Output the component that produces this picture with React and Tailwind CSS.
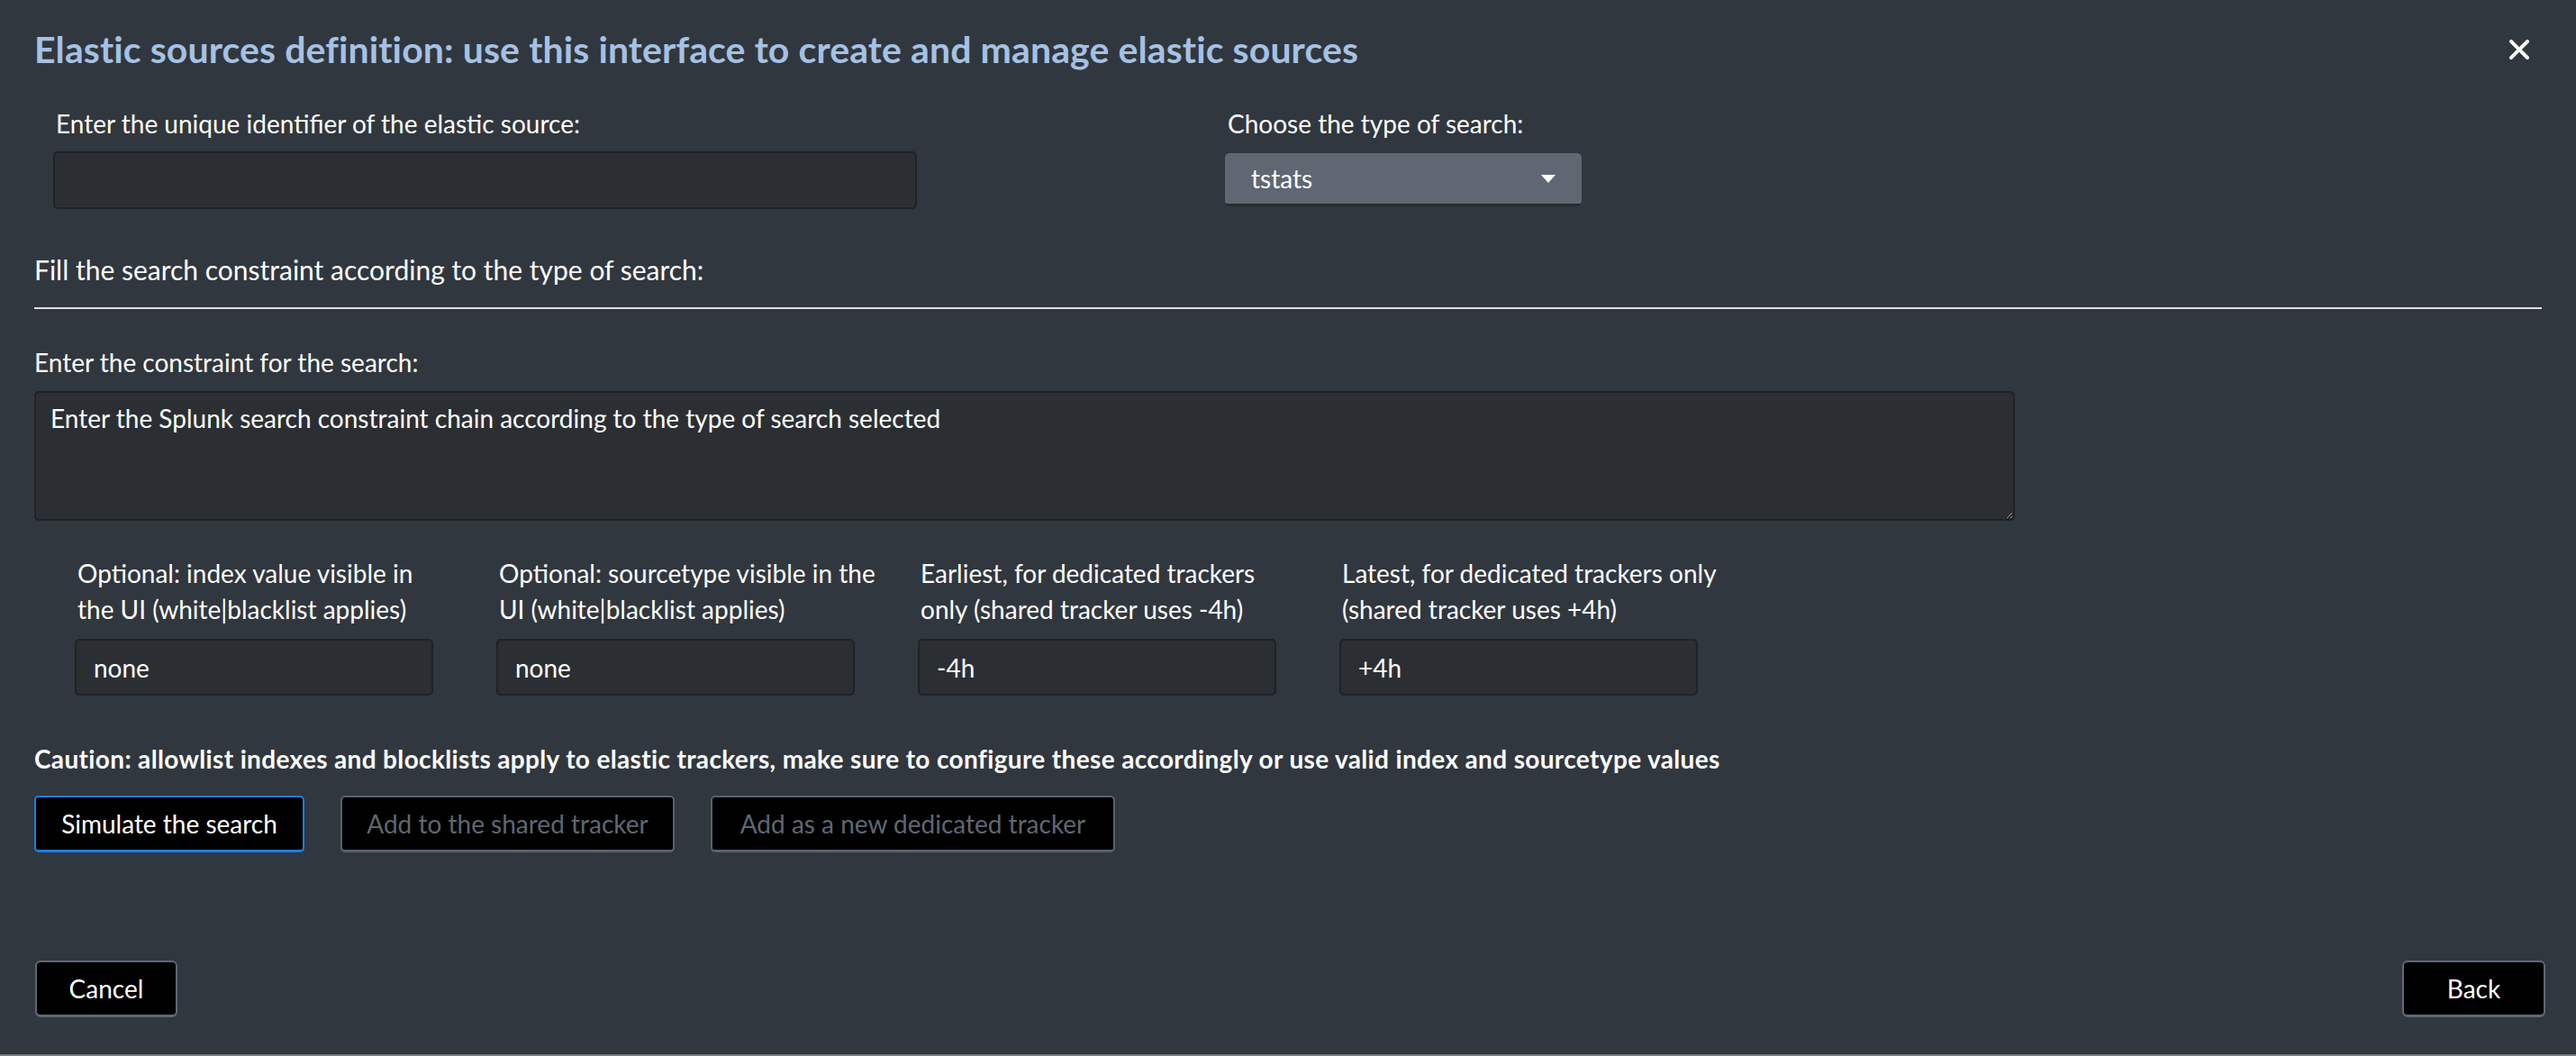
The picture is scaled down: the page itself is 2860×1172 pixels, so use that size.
import React from "react";

const font = { fontFamily: "Lato, 'Open Sans', sans-serif" };

function Field({ label1, label2, value }) {
  return (
    <div className="flex w-[398px] flex-col">
      <div className="pl-[3px] text-[28px] leading-[40px] text-white whitespace-nowrap">
        <div>{label1}</div>
        <div>{label2}</div>
      </div>
      <input
        defaultValue={value}
        className="mt-[13px] h-[63px] w-[398px] rounded-[5px] border-2 border-[#1f2326] bg-[#2b2f33] px-[19px] text-[28px] text-white outline-none"
      />
    </div>
  );
}

export default function App() {
  return (
    <div
      className="flex h-[1172px] w-[2860px] flex-col overflow-hidden bg-[#31373e] text-white"
      style={font}
    >
      <div className="flex flex-1 flex-col px-[38px]">
        {/* header */}
        <div className="flex items-center justify-between pt-[34px]">
          <h1 className="text-[41px] font-bold leading-[42px] tracking-[0.1px] text-[#a5c1e3]">
            Elastic sources definition: use this interface to create and manage elastic sources
          </h1>
          <button className="mr-[13px] flex h-[24px] w-[24px] items-center justify-center">
            <svg width="22" height="22" viewBox="0 0 22 22">
              <path d="M2 2 L20 20 M20 2 L2 20" stroke="white" strokeWidth="4" strokeLinecap="square" />
            </svg>
          </button>
        </div>

        {/* row 1 */}
        <div className="mt-[41px] flex">
          <div className="ml-[21px] flex w-[959px] flex-col">
            <div className="pl-[3px] text-[28px] leading-[40px]">
              Enter the unique identifier of the elastic source:
            </div>
            <input className="mt-[11px] h-[64px] w-[959px] rounded-[5px] border-2 border-[#1f2326] bg-[#2b2f33] px-[18px] text-[28px] text-white outline-none" />
          </div>
          <div className="ml-[342px] flex w-[396px] flex-col">
            <div className="pl-[3px] text-[28px] leading-[40px]">Choose the type of search:</div>
            <div className="mt-[13px] flex h-[59px] w-[396px] items-center justify-between rounded-[5px] border-b-[3px] border-[#262b30] bg-[#5f6773] pl-[29px] pr-[29px]">
              <span className="text-[28px] text-white">tstats</span>
              <svg width="16" height="9" viewBox="0 0 16 9">
                <path d="M0 0 L16 0 L8 9 Z" fill="white" />
              </svg>
            </div>
          </div>
        </div>

        {/* section title */}
        <div className="mt-[46px] text-[30px] leading-[42px]">
          Fill the search constraint according to the type of search:
        </div>
        <div className="mt-[21px] h-[2px] w-full bg-[#dcdde0]" />

        <div className="mt-[39px] text-[28px] leading-[40px]">Enter the constraint for the search:</div>
        <textarea
          defaultValue="Enter the Splunk search constraint chain according to the type of search selected"
          className="mt-[12px] h-[144px] w-[2199px] rounded-[5px] border-2 border-[#1f2326] bg-[#2b2f33] px-[16px] pt-[8px] text-[28px] leading-[40px] text-white outline-none"
        />

        {/* optional row */}
        <div className="ml-[45px] mt-[38px] flex gap-[70px]">
          <Field label1="Optional: index value visible in" label2="the UI (white|blacklist applies)" value="none" />
          <Field label1="Optional: sourcetype visible in the" label2="UI (white|blacklist applies)" value="none" />
          <Field label1="Earliest, for dedicated trackers" label2="only (shared tracker uses -4h)" value="-4h" />
          <Field label1="Latest, for dedicated trackers only" label2="(shared tracker uses +4h)" value="+4h" />
        </div>

        <div className="mt-[50px] text-[28px] font-bold leading-[40px] tracking-[0.35px]">
          Caution: allowlist indexes and blocklists apply to elastic trackers, make sure to configure these accordingly or use valid index and sourcetype values
        </div>

        <div className="mt-[21px] flex gap-[40px]">
          <button className="h-[63px] w-[300px] rounded-[5px] border-2 border-b-[3px] border-[#1a7fe8] bg-black text-[28px] text-white">
            Simulate the search
          </button>
          <button className="h-[63px] w-[371px] rounded-[5px] border-2 border-b-[3px] border-[#5a616c] bg-black text-[28px] text-[#5f6773]">
            Add to the shared tracker
          </button>
          <button className="h-[63px] w-[449px] rounded-[5px] border-2 border-b-[3px] border-[#5a616c] bg-black text-[28px] text-[#5f6773]">
            Add as a new dedicated tracker
          </button>
        </div>

        <div className="flex-1" />

        <div className="mb-[41px] flex justify-between pl-[1px]">
          <button className="h-[63px] w-[158px] rounded-[6px] border-2 border-b-[3px] border-[#5f6773] bg-black text-[28px] text-white">
            Cancel
          </button>
          <button className="mr-[-4px] h-[63px] w-[159px] rounded-[6px] border-2 border-b-[3px] border-[#5f6773] bg-black text-[28px] text-white">
            Back
          </button>
        </div>
      </div>
      <div className="h-[2px] w-full shrink-0 bg-[#7b7b7b]" />
    </div>
  );
}
